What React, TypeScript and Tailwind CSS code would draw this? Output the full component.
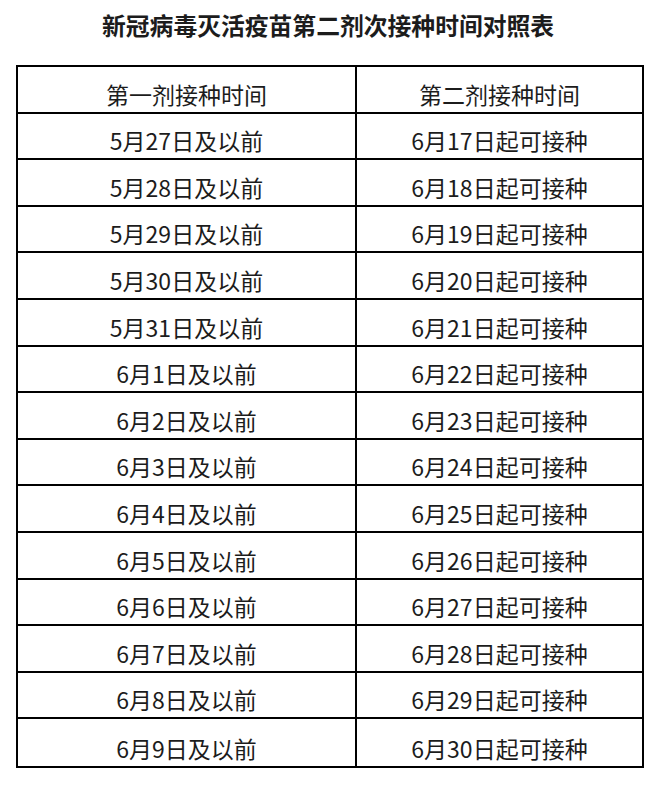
const rows: [string, string][] = [
  ["5月27日及以前", "6月17日起可接种"],
  ["5月28日及以前", "6月18日起可接种"],
  ["5月29日及以前", "6月19日起可接种"],
  ["5月30日及以前", "6月20日起可接种"],
  ["5月31日及以前", "6月21日起可接种"],
  ["6月1日及以前", "6月22日起可接种"],
  ["6月2日及以前", "6月23日起可接种"],
  ["6月3日及以前", "6月24日起可接种"],
  ["6月4日及以前", "6月25日起可接种"],
  ["6月5日及以前", "6月26日起可接种"],
  ["6月6日及以前", "6月27日起可接种"],
  ["6月7日及以前", "6月28日起可接种"],
  ["6月8日及以前", "6月29日起可接种"],
  ["6月9日及以前", "6月30日起可接种"],
];

const Row = ({ left, right, last }: { left: string; right: string; last?: boolean }) => (
  <div className={`flex h-[46.6px] ${last ? "" : "border-b-2 border-black"}`}>
    <div className="w-[339px] border-r-2 border-black flex items-end justify-center pb-[2px]">
      {left}
    </div>
    <div className="flex-1 flex items-end justify-center pb-[2px]">{right}</div>
  </div>
);

export default function App() {
  return (
    <div
      className="w-[668px] h-[792px] bg-white text-[#1c1c1c] overflow-hidden"
      style={{ fontFamily: '"Noto Sans CJK SC", "Noto Sans", sans-serif' }}
    >
      <h1 className="pt-[9px] pl-[102px] text-[23.8px] leading-[32px] font-bold tracking-[0px]">
        新冠病毒灭活疫苗第二剂次接种时间对照表
      </h1>
      <div className="mt-[24px] ml-[16px] w-[628px] border-2 border-black text-[23px] leading-[32px]">
        <Row left="第一剂接种时间" right="第二剂接种时间" />
        {rows.map(([l, r], i) => (
          <Row key={l} left={l} right={r} last={i === rows.length - 1} />
        ))}
      </div>
    </div>
  );
}
